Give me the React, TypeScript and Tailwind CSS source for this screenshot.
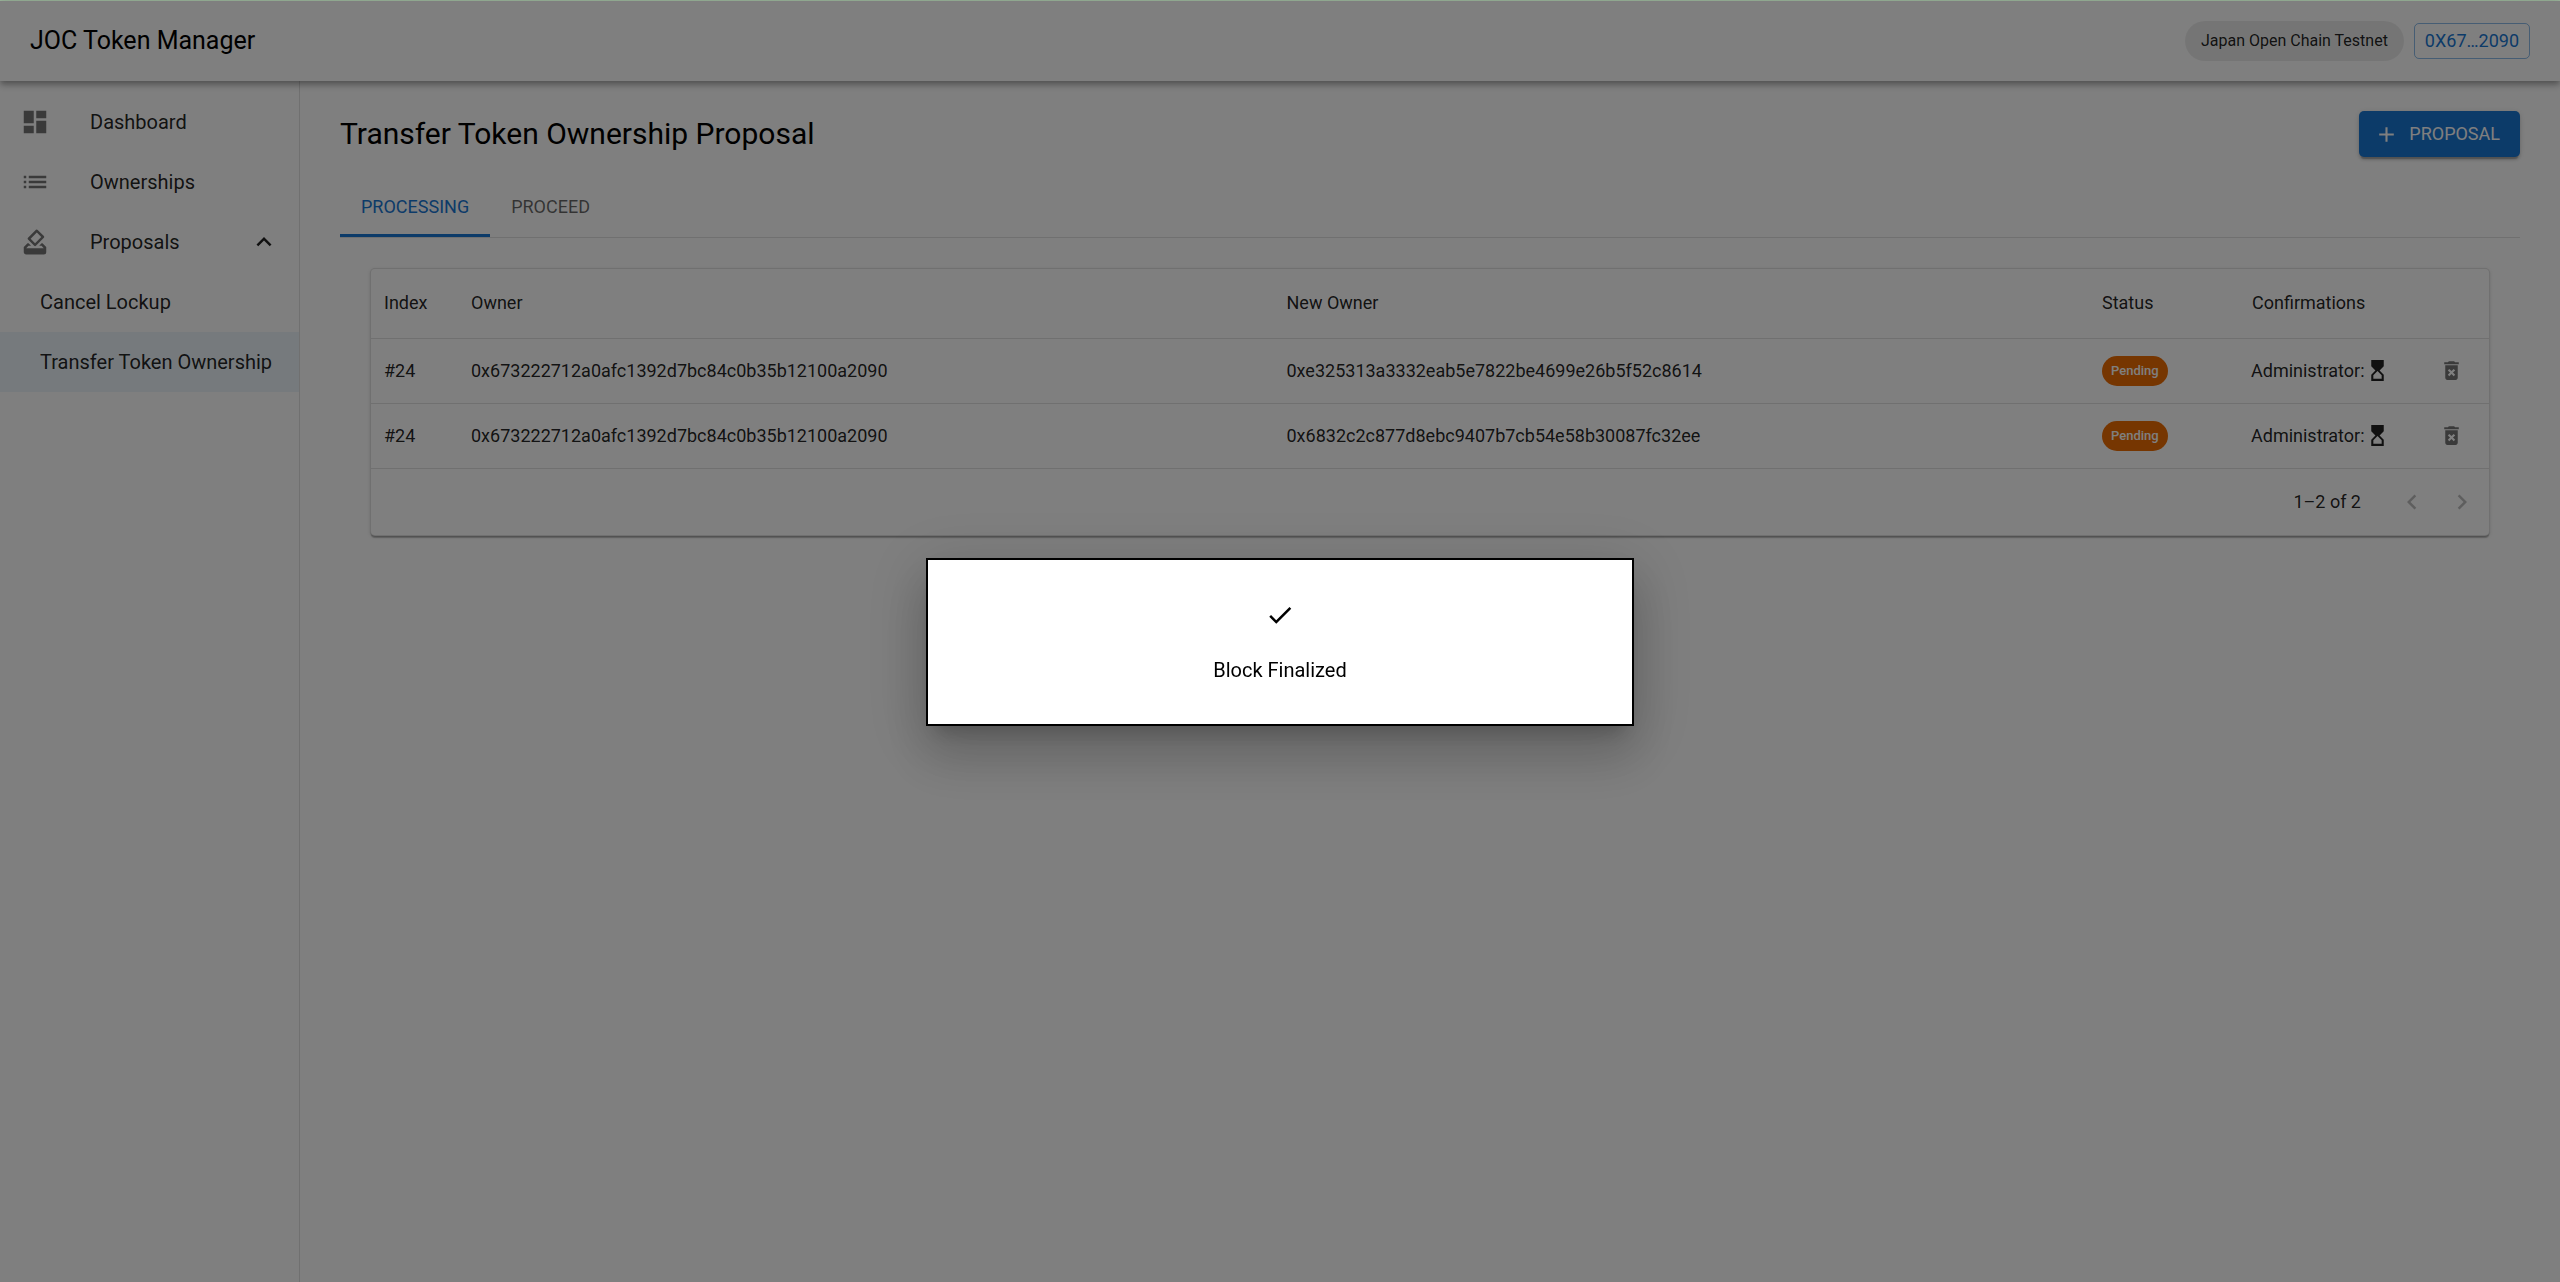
import React, { useState } from 'react';
import {
    MdAdd,
    MdCheck,
    MdChevronLeft,
    MdChevronRight,
    MdDashboard,
    MdDeleteForever,
    MdExpandLess,
    MdHourglassTop,
    MdHowToVote,
    MdList,
} from 'react-icons/md';

const proposals = [
    {
        index: '#24',
        owner: '0x673222712a0afc1392d7bc84c0b35b12100a2090',
        newOwner: '0xe325313a3332eab5e7822be4699e26b5f52c8614',
        status: 'Pending',
    },
    {
        index: '#24',
        owner: '0x673222712a0afc1392d7bc84c0b35b12100a2090',
        newOwner: '0x6832c2c877d8ebc9407b7cb54e58b30087fc32ee',
        status: 'Pending',
    },
];

const Header: React.FC = () => (
    <header className="relative z-10 flex h-20 items-center justify-between bg-white px-[30px] shadow-[0_3px_5px_-1px_rgba(0,0,0,0.2),0_5px_6px_0_rgba(0,0,0,0.14),0_1px_12px_0_rgba(0,0,0,0.12)]">
        <div className="text-[25px] leading-10 text-black">JOC Token Manager</div>
        <div className="flex items-center gap-2.5">
            <span className="flex h-10 items-center rounded-full bg-black/8 px-4 text-base text-black/87">
                Japan Open Chain Testnet
            </span>
            <button className="flex h-9 items-center rounded-[5px] border border-[#1976d2]/50 px-2.5 text-lg text-[#1976d2]">
                0X67…2090
            </button>
        </div>
    </header>
);

const Sidebar: React.FC = () => {
    const [open, setOpen] = useState(true);

    return (
        <nav className="w-[300px] shrink-0 border-r border-black/12 pt-[11px] text-xl text-black/87">
            <a href="#dashboard" className="flex h-[60px] items-center gap-10 px-5">
                <MdDashboard className="size-[30px] text-black/54" />
                Dashboard
            </a>
            <a href="#ownerships" className="flex h-[60px] items-center gap-10 px-5">
                <MdList className="size-[30px] text-black/54" />
                Ownerships
            </a>
            <button
                className="flex h-[60px] w-full items-center gap-10 px-5 text-left"
                aria-expanded={open}
                onClick={() => setOpen(!open)}
            >
                <MdHowToVote className="size-[30px] text-black/54" />
                <span className="flex-1">Proposals</span>
                <MdExpandLess className={`size-[30px] ${open ? '' : 'rotate-180'}`} />
            </button>
            {open && (
                <>
                    <a href="#cancel-lockup" className="flex h-[60px] items-center pl-10 whitespace-nowrap">
                        Cancel Lockup
                    </a>
                    <a href="#transfer" className="flex h-[60px] items-center bg-[#1976d2]/8 pl-10 whitespace-nowrap">
                        Transfer Token Ownership
                    </a>
                </>
            )}
        </nav>
    );
};

const ProposalTable: React.FC = () => (
    <div className="rounded-[5px] border border-black/12 bg-white text-lg text-black/87 shadow-[0_3px_1px_-1px_rgba(0,0,0,0.2),0_1px_1px_0_rgba(0,0,0,0.14),0_1px_4px_0_rgba(0,0,0,0.12)]">
        <table className="w-full table-fixed text-left">
            <colgroup>
                <col className="w-[87px]" />
                <col />
                <col />
                <col className="w-[150px]" />
                <col className="w-[175px]" />
                <col className="w-[75px]" />
            </colgroup>
            <thead>
                <tr className="h-[69px] border-b border-black/12">
                    <th className="px-[13px] font-normal">Index</th>
                    <th className="px-[13px] font-normal">Owner</th>
                    <th className="px-[13px] font-normal">New Owner</th>
                    <th className="px-[13px] font-normal">Status</th>
                    <th className="px-[13px] font-normal">Confirmations</th>
                    <th />
                </tr>
            </thead>
            <tbody>
                {proposals.map(p => (
                    <tr key={p.newOwner} className="h-[65px] border-b border-black/12">
                        <td className="px-[13px]">{p.index}</td>
                        <td className="px-[13px]">{p.owner}</td>
                        <td className="px-[13px]">{p.newOwner}</td>
                        <td className="px-[13px]">
                            <span className="inline-flex h-[30px] items-center rounded-full bg-[#ed6c02] px-[9px] align-middle text-[13px] font-medium text-white">
                                {p.status}
                            </span>
                        </td>
                        <td className="px-3">
                            <span className="flex items-center whitespace-nowrap">
                                Administrator:
                                <MdHourglassTop className="size-[25px]" />
                            </span>
                        </td>
                        <td>
                            <button className="mx-auto flex text-black/54" aria-label="Delete proposal">
                                <MdDeleteForever className="size-[25px]" />
                            </button>
                        </td>
                    </tr>
                ))}
            </tbody>
        </table>
        <div className="flex h-[66px] items-center justify-end gap-5 pr-3">
            <span className="mr-4">1–2 of 2</span>
            <button className="text-black/26" aria-label="Previous page" disabled>
                <MdChevronLeft className="size-[30px]" />
            </button>
            <button className="text-black/26" aria-label="Next page" disabled>
                <MdChevronRight className="size-[30px]" />
            </button>
        </div>
    </div>
);

const App: React.FC = () => {
    const [tab, setTab] = useState('Processing');

    return (
        <div className="flex min-h-screen flex-col border-t border-[#9ab39a] bg-white font-[Roboto,sans-serif]">
            <Header />
            <div className="flex flex-1">
                <Sidebar />
                <main className="min-w-0 flex-1 px-10 pt-[30px]">
                    <div className="flex items-center justify-between">
                        <h1 className="text-3xl text-black">Transfer Token Ownership Proposal</h1>
                        <button className="flex h-[46px] items-center gap-2.5 rounded-[5px] bg-[#1976d2] pr-5 pl-[15px] text-lg text-white shadow-[0_4px_1px_-2px_rgba(0,0,0,0.2),0_3px_3px_0_rgba(0,0,0,0.14),0_1px_6px_0_rgba(0,0,0,0.12)]">
                            <MdAdd className="size-[25px]" />
                            PROPOSAL
                        </button>
                    </div>

                    <div className="mt-5 flex border-b border-black/12" role="tablist">
                        {['Processing', 'Proceed'].map(name => (
                            <button
                                key={name}
                                role="tab"
                                aria-selected={tab === name}
                                onClick={() => setTab(name)}
                                className={`h-[60px] border-b-3 px-[21px] pt-[3px] text-lg uppercase ${
                                    tab === name ? 'border-[#1976d2] text-[#1976d2]' : 'border-transparent text-black/60'
                                }`}
                            >
                                {name}
                            </button>
                        ))}
                    </div>

                    <div className="p-[30px]">
                        <ProposalTable />
                    </div>
                </main>
            </div>

            {/* Modal */}
            <div className="fixed inset-0 top-px z-20 flex items-center justify-center bg-black/50">
                <div
                    role="dialog"
                    aria-label="Block Finalized"
                    className="flex w-[708px] flex-col items-center gap-[25px] border-2 border-black bg-white p-10 pb-[39px] text-xl text-black shadow-[0_14px_19px_-9px_rgba(0,0,0,0.2),0_30px_48px_4px_rgba(0,0,0,0.14),0_11px_58px_10px_rgba(0,0,0,0.12)]"
                >
                    <MdCheck className="size-[30px]" />
                    <p className="leading-[30px]">Block Finalized</p>
                </div>
            </div>
        </div>
    );
};

export default App;
